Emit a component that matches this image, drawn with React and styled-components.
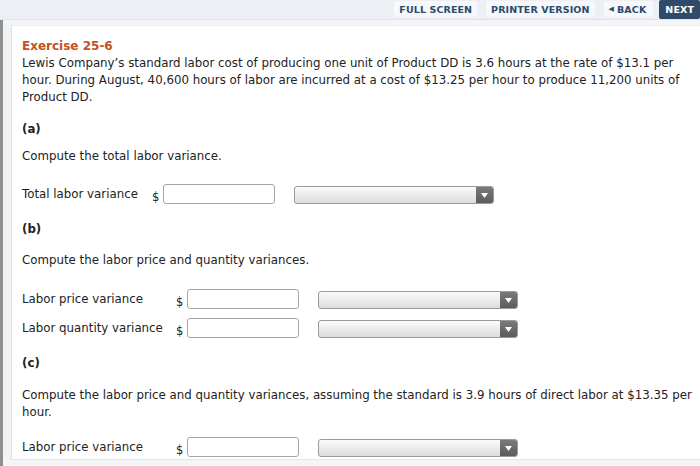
import React from "react";
import styled, { createGlobalStyle } from "styled-components";

const GlobalStyle = createGlobalStyle`
  html, body {
    margin: 0;
    padding: 0;
    background: #f4f5f7;
    font-family: "DejaVu Sans", Verdana, sans-serif;
    color: #222;
  }
`;

const Page = styled.div`
  width: 700px;
  height: 466px;
  overflow: hidden;
  display: flex;
  flex-direction: column;
`;

const Toolbar = styled.div`
  height: 19px;
  background: #eceff3;
  border-bottom: 1px solid #dfe3e8;
  display: flex;
  justify-content: flex-end;
  align-items: stretch;
  gap: 9px;
  flex-shrink: 0;
`;

const ToolButton = styled.div`
  display: flex;
  align-items: center;
  padding: 0 ${(p) => (p.$dark ? "6px" : "5px")};
  margin: ${(p) => (p.$dark ? "0 0 0 -3px" : "1px 0 2px")};
  background: ${(p) => (p.$dark ? "#2f4b69" : "#f6f8fb")};
  color: ${(p) => (p.$dark ? "#ffffff" : "#2c4a6c")};
  font-size: 9.5px;
  font-weight: bold;
  border-radius: 2px;
  letter-spacing: 0.1px;
`;

const Body = styled.div`
  flex: 1;
  display: flex;
  padding: 5px 0 6px;
  min-height: 0;
`;

const Rail = styled.div`
  width: 3px;
  background: #8f8f8f;
  margin: -5px 0 -6px;
`;

const Gutter = styled.div`
  width: 8px;
  background: #f1f2f4;
`;

const Panel = styled.div`
  flex: 1;
  background: #ffffff;
  border-left: 1px solid #dde4ec;
  border-top: 1px solid #e8ecf0;
  border-bottom: 1px solid #e2e6ea;
  padding: 12px 8px 0 10px;
  overflow: hidden;
  font-size: 11.8px;
  line-height: 17px;
`;

const Title = styled.div`
  color: #c2521d;
  font-weight: bold;
  font-size: 12px;
`;

const Para = styled.p`
  margin: ${(p) => p.$mt || 0}px 0 0;
`;

const SectionHead = styled.div`
  font-weight: bold;
  margin-top: ${(p) => p.$mt || 16}px;
`;

const Row = styled.div`
  display: flex;
  align-items: center;
  height: 20px;
  margin-top: ${(p) => p.$mt || 0}px;
`;

const Label = styled.div`
  width: ${(p) => p.$w}px;
  flex-shrink: 0;
`;

const Dollar = styled.span`
  align-self: flex-end;
  font-size: 11.5px;
  line-height: 14px;
  margin-right: 1px;
  width: 10px;
`;

const Amount = styled.div`
  width: 110px;
  height: 18px;
  border: 1px solid #a6a6a6;
  border-radius: 3px;
  background: #fff;
`;

const Select = styled.div`
  width: 198px;
  height: 16px;
  margin-left: 19px;
  margin-top: 2px;
  border: 1px solid #9a9a9a;
  border-radius: 3px;
  background: linear-gradient(#fbfbfb, #dcdcdc);
  display: flex;
  justify-content: flex-end;
  overflow: hidden;
`;

const Arrow = styled.div`
  width: 17px;
  background: linear-gradient(#7a7a7a, #5c5c5c);
  display: flex;
  align-items: center;
  justify-content: center;
`;

function Caret() {
  return (
    <svg width="7" height="5" viewBox="0 0 7 5">
      <polygon points="0,0 7,0 3.5,5" fill="#ffffff" />
    </svg>
  );
}

function AnswerRow({ label, labelWidth, mt }) {
  return (
    <Row $mt={mt}>
      <Label $w={labelWidth}>{label}</Label>
      <Dollar>$</Dollar>
      <Amount />
      <Select>
        <Arrow>
          <Caret />
        </Arrow>
      </Select>
    </Row>
  );
}

export default function App() {
  return (
    <Page>
      <GlobalStyle />
      <Toolbar>
        <ToolButton>FULL SCREEN</ToolButton>
        <ToolButton>PRINTER VERSION</ToolButton>
        <ToolButton style={{ paddingRight: "7px" }}>
          <span style={{ fontSize: "7px", marginRight: "3px" }}>◀</span>BACK
        </ToolButton>
        <ToolButton $dark>NEXT</ToolButton>
      </Toolbar>
      <Body>
        <Rail />
        <Gutter />
        <Panel>
          <Title>Exercise 25-6</Title>
          <Para>
            Lewis Company’s standard labor cost of producing one unit of Product DD is 3.6 hours at the rate of $13.1 per
            hour. During August, 40,600 hours of labor are incurred at a cost of $13.25 per hour to produce 11,200 units of
            Product DD.
          </Para>

          <SectionHead $mt={15}>(a)</SectionHead>
          <Para $mt={10}>Compute the total labor variance.</Para>
          <AnswerRow label="Total labor variance" labelWidth={130} mt={19} />

          <SectionHead $mt={17}>(b)</SectionHead>
          <Para $mt={14}>Compute the labor price and quantity variances.</Para>
          <AnswerRow label="Labor price variance" labelWidth={154} mt={20} />
          <AnswerRow label="Labor quantity variance" labelWidth={154} mt={9} />

          <SectionHead $mt={17}>(c)</SectionHead>
          <Para $mt={15}>
            Compute the labor price and quantity variances, assuming the standard is 3.9 hours of direct labor at $13.35 per
            hour.
          </Para>
          <AnswerRow label="Labor price variance" labelWidth={154} mt={16} />
        </Panel>
      </Body>
    </Page>
  );
}
